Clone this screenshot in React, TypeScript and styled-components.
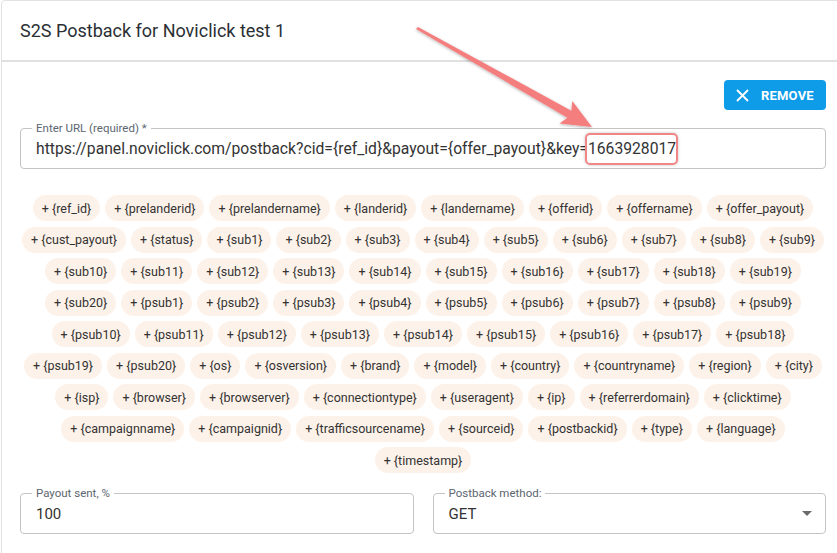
import React from "react";
import styled, { createGlobalStyle } from "styled-components";

const Global = createGlobalStyle`
  html, body { margin: 0; padding: 0; background: #fff; overflow: hidden; }
  body { font-family: Roboto, "Liberation Sans", Arial, sans-serif; color: #333; }
  #root { width: 837px; height: 553px; overflow: hidden; position: relative; }
`;

const Page = styled.div`
  position: relative;
  width: 837px;
  height: 553px;
  padding: 0 0 0 1px;
  box-sizing: border-box;
`;

const Card = styled.div`
  width: 844px;
  box-sizing: border-box;
  border: 1px solid #e2e2e2;
  border-radius: 4px;
  background: #fff;
  min-height: 600px;
`;

const Header = styled.div`
  height: 59px;
  display: flex;
  align-items: center;
  padding: 0 18px;
  border-bottom: 2px solid #e0e0e0;
`;

const Title = styled.h2`
  margin: 0;
  font-size: 18px;
  font-weight: 400;
  color: #2a2f34;
`;

const Body = styled.div`
  padding: 18px 18px 0 18px;
  display: flex;
  flex-direction: column;
`;

const ActionRow = styled.div`
  display: flex;
  justify-content: flex-end;
`;

const RemoveButton = styled.button`
  height: 30px;
  width: 102px;
  display: flex;
  align-items: center;
  gap: 12px;
  padding: 0 0 0 12px;
  border: none;
  border-radius: 4px;
  background: #0e9ce8;
  color: #fff;
  font-family: Roboto, "Liberation Sans", Arial, sans-serif;
  font-size: 13px;
  font-weight: 700;
  letter-spacing: 0.2px;
`;

const Field = styled.div<{ $mt?: number }>`
  position: relative;
  margin-top: ${(p) => p.$mt ?? 0}px;
  height: 41px;
  box-sizing: border-box;
  border: 1px solid #c4c4c4;
  border-radius: 4px;
  display: flex;
  align-items: center;
  padding: 0 15px;
`;

const FieldLabel = styled.span`
  position: absolute;
  left: 11px;
  top: -8px;
  padding: 0 4px;
  background: #fff;
  font-size: 11.5px;
  line-height: 14px;
  color: #5b6670;
`;

const FieldValue = styled.span<{ $size?: number }>`
  font-size: ${(p) => p.$size ?? 15}px;
  color: #333;
  white-space: nowrap;
  flex: 1;
`;

const Highlight = styled.span`
  position: relative;
  &::after {
    content: "";
    position: absolute;
    left: -3px;
    right: -2px;
    top: -6px;
    bottom: -7px;
    border: 2px solid #f18686;
    border-radius: 5px;
    box-shadow: 0 0 3px rgba(0, 0, 0, 0.25);
  }
`;

const Chips = styled.div`
  margin-top: 26px;
  display: flex;
  flex-direction: column;
  gap: 5.5px;
`;

const ChipRow = styled.div`
  display: flex;
  justify-content: center;
  gap: 5px;
`;

const Chip = styled.span`
  height: 26px;
  display: inline-flex;
  align-items: center;
  padding: 0 9px;
  border-radius: 13px;
  background: #fdf2e9;
  font-size: 12.5px;
  color: #333;
  white-space: nowrap;
  flex-shrink: 0;
`;

const BottomRow = styled.div`
  margin-top: 20px;
  display: grid;
  grid-template-columns: 1fr 1fr;
  gap: 19px;
`;

const Caret = styled.span`
  width: 0;
  height: 0;
  border-left: 5px solid transparent;
  border-right: 5px solid transparent;
  border-top: 5px solid #6b6b6b;
  margin-right: -2px;
`;

const Overlay = styled.svg`
  position: absolute;
  left: 0;
  top: 0;
  pointer-events: none;
  overflow: visible;
`;

const rows: string[][] = [
  ["ref_id", "prelanderid", "prelandername", "landerid", "landername", "offerid", "offername", "offer_payout"],
  ["cust_payout", "status", "sub1", "sub2", "sub3", "sub4", "sub5", "sub6", "sub7", "sub8", "sub9"],
  ["sub10", "sub11", "sub12", "sub13", "sub14", "sub15", "sub16", "sub17", "sub18", "sub19"],
  ["sub20", "psub1", "psub2", "psub3", "psub4", "psub5", "psub6", "psub7", "psub8", "psub9"],
  ["psub10", "psub11", "psub12", "psub13", "psub14", "psub15", "psub16", "psub17", "psub18"],
  ["psub19", "psub20", "os", "osversion", "brand", "model", "country", "countryname", "region", "city"],
  ["isp", "browser", "browserver", "connectiontype", "useragent", "ip", "referrerdomain", "clicktime"],
  ["campaignname", "campaignid", "trafficsourcename", "sourceid", "postbackid", "type", "language"],
  ["timestamp"],
];

export default function App() {
  return (
    <>
      <Global />
      <Page>
        <Card>
          <Header>
            <Title>S2S Postback for Noviclick test 1</Title>
          </Header>
          <Body>
            <ActionRow>
              <RemoveButton>
                <svg width="13" height="13" viewBox="0 0 13 13">
                  <path d="M1 1 L12 12 M12 1 L1 12" stroke="#fff" strokeWidth="1.8" fill="none" />
                </svg>
                REMOVE
              </RemoveButton>
            </ActionRow>
            <Field $mt={18}>
              <FieldLabel>Enter URL (required) *</FieldLabel>
              <FieldValue $size={15.7}>
                https://panel.noviclick.com/postback?cid=&#123;ref_id&#125;&amp;payout=&#123;offer_payout&#125;&amp;key=
                <Highlight>1663928017</Highlight>
              </FieldValue>
            </Field>
            <Chips>
              {rows.map((r, i) => (
                <ChipRow key={i}>
                  {r.map((c) => (
                    <Chip key={c}>+ {"{" + c + "}"}</Chip>
                  ))}
                </ChipRow>
              ))}
            </Chips>
            <BottomRow>
              <Field>
                <FieldLabel>Payout sent, %</FieldLabel>
                <FieldValue>100</FieldValue>
              </Field>
              <Field>
                <FieldLabel>Postback method:</FieldLabel>
                <FieldValue>GET</FieldValue>
                <Caret />
              </Field>
            </BottomRow>
          </Body>
        </Card>
        <Overlay width="837" height="553" viewBox="0 0 837 553">
          <defs>
            <filter id="sh" x="-10%" y="-10%" width="120%" height="120%">
              <feDropShadow dx="0" dy="1" stdDeviation="1.5" floodColor="#000" floodOpacity="0.3" />
            </filter>
          </defs>
          <polygon
            points="416,29 418,27 571.4,110.7 572.3,100.9 592,127 559.5,123.5 567.4,117.7"
            fill="#f47e7e"
            filter="url(#sh)"
          />
        </Overlay>
      </Page>
    </>
  );
}
